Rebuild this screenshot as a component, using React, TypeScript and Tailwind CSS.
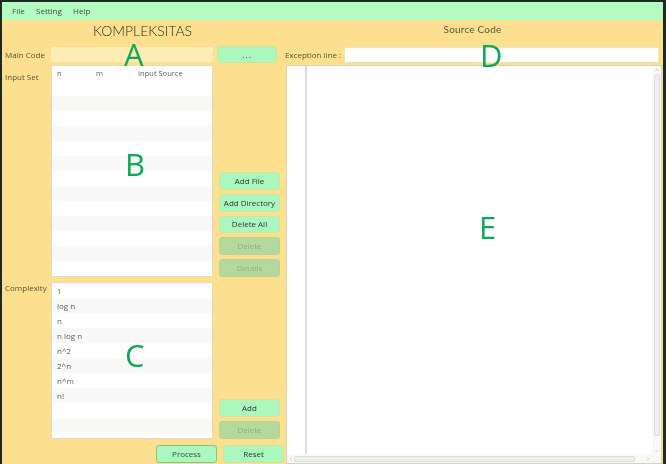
import { ChevronUp, ChevronDown, ChevronLeft, ChevronRight } from "lucide-react";

const Btn = ({ label, disabled, dark, className = "" }: { label: string; disabled?: boolean; dark?: boolean; className?: string }) => (
  <button
    className={`flex h-[18px] w-[61px] items-center justify-center whitespace-nowrap rounded-[3px] border text-[8px] ${
      disabled
        ? "border-[#b4d496] bg-[#b5d99c] text-[#8fae80]"
        : dark
        ? "border-[#7fc48a] bg-[#aaf8bd] text-[#3c4a3c]"
        : "border-[#cfe39a] bg-[#aaf8bd] text-[#333]"
    } ${className}`}
  >
    {label}
  </button>
);

const Rows = ({ items, count }: { items: string[]; count: number }) => (
  <>
    {Array.from({ length: count }).map((_, i) => (
      <div key={i} className={`h-[15px] pl-[5px] text-[8px] leading-[15px] text-[#5f5f5f] ${i % 2 ? "bg-[#f8f8f7]" : "bg-white"}`}>
        {items[i] ?? ""}
      </div>
    ))}
  </>
);

const Letter = ({ c, className }: { c: string; className: string }) => (
  <span className={`pointer-events-none absolute text-[31px] leading-none text-[#10a858] ${className}`}>{c}</span>
);

export default function App() {
  return (
    <div className="relative h-[464px] w-[666px] overflow-hidden bg-[#1d2a22] pl-[2px] pr-[3px] pt-[2px] font-['Open_Sans',sans-serif] blur-[0.35px]">
      <div className="flex h-[462px] flex-col bg-[#fde08f]">
        <div className="flex h-[18px] items-center bg-[#b3fdc0] pl-[10px] text-[8px] text-[#3f4f45]">
          <span className="w-[24px]">File</span>
          <span className="w-[37px]">Setting</span>
          <span>Help</span>
        </div>
        <div className="flex flex-1">
          {/* left pane */}
          <div className="flex w-[283px] shrink-0 flex-col">
            <div className="h-[26px] pl-[91px] pt-[1px] font-['Lato',sans-serif] text-[14px] font-light leading-[20px] text-[#2e2a1e]">KOMPLEKSITAS</div>
            <div className="flex h-[17px] items-center">
              <span className="w-[49px] pl-[3px] text-[8px] text-[#5a5330]">Main Code</span>
              <div className="h-[15px] w-[162px] rounded-[2px] bg-[#fdecb4]" />
              <button className="ml-[4px] flex h-[17px] w-[60px] items-center justify-center rounded-[3px] border border-[#cfe39a] bg-[#aaf8bd] text-[9px] tracking-[1px] text-[#555]">...</button>
            </div>
            <div className="mt-[2px] flex h-[212px]">
              <span className="w-[49px] pl-[3px] pt-[6px] text-[8px] leading-[12px] text-[#5a5330]">Input Set</span>
              <div className="h-full w-[162px] overflow-hidden border border-[#e4dcc0] bg-white">
                <div className="flex h-[15px] items-center pl-[5px] text-[7.5px] text-[#5f5f5f]">
                  <span className="w-[39px]">n</span>
                  <span className="w-[42px]">m</span>
                  <span>Input Source</span>
                </div>
                <Rows items={[]} count={13} />
              </div>
              <div className="ml-[6px] mt-[107px] flex flex-col gap-[4px]">
                <Btn label="Add File" />
                <Btn label="Add Directory" />
                <Btn label="Delete All" />
                <Btn label="Delete" disabled />
                <Btn label="Details" disabled />
              </div>
            </div>
            <div className="mt-[5px] flex h-[157px]">
              <span className="w-[49px] pl-[3px] text-[8px] leading-[12px] text-[#5a5330]">Complexity</span>
              <div className="h-full w-[162px] overflow-hidden border border-[#e4dcc0] bg-white">
                <Rows items={["1", "log n", "n", "n log n", "n^2", "2^n", "n^m", "n!"]} count={11} />
              </div>
              <div className="ml-[6px] mt-[117px] flex flex-col gap-[4px]">
                <Btn label="Add" className="w-[60px]" />
                <Btn label="Delete" disabled className="w-[60px]" />
              </div>
            </div>
            <div className="mt-[6px] flex gap-[6px] pl-[154px]">
              <Btn label="Process" dark className="w-[60px]" />
              <Btn label="Reset" className="w-[60px]" />
            </div>
          </div>
          {/* right pane */}
          <div className="flex min-w-0 flex-1 flex-col">
            <div className="h-[26px] pr-[3px] pt-[1px] text-center font-['Lato',sans-serif] text-[10px] leading-[16px] tracking-[0.2px] text-[#5a5540]">Source Code</div>
            <div className="flex h-[17px] items-center">
              <span className="w-[59px] whitespace-nowrap text-[8px] text-[#5a5330]">Exception line :</span>
              <div className="h-[16px] w-[315px] rounded-[2px] border border-[#ece4c4] bg-white" />
            </div>
            <div className="ml-[1px] mr-[1px] mt-[2px] flex flex-1 flex-col border border-[#d8d2b8] bg-white">
              <div className="flex min-h-0 flex-1">
                <div className="w-[20px] border-r-2 border-[#dcdcd8]" />
                <div className="flex-1" />
                <div className="flex w-[9px] flex-col items-center bg-[#f8f8f8]">
                  <ChevronUp className="mt-[1px] h-[6px] w-[6px] text-[#aaa]" />
                  <div className="mt-[1px] h-[362px] w-[6px] rounded-[2px] border border-[#dcdcdc] bg-[#efefef]" />
                  <ChevronDown className="mt-auto h-[6px] w-[6px] text-[#aaa]" />
                </div>
              </div>
              <div className="flex h-[9px] items-center bg-[#f8f8f8] pl-[1px]">
                <ChevronLeft className="h-[6px] w-[6px] text-[#aaa]" />
                <div className="h-[6px] w-[341px] rounded-[2px] border border-[#dcdcdc] bg-[#efefef]" />
                <ChevronRight className="ml-auto mr-[10px] h-[6px] w-[6px] text-[#aaa]" />
              </div>
            </div>
          </div>
        </div>
      </div>
      <Letter c="A" className="left-[124px] top-[39px]" />
      <Letter c="B" className="left-[125px] top-[149px]" />
      <Letter c="C" className="left-[125px] top-[340px]" />
      <Letter c="D" className="left-[480px] top-[40px]" />
      <Letter c="E" className="left-[479px] top-[212px]" />
    </div>
  );
}
